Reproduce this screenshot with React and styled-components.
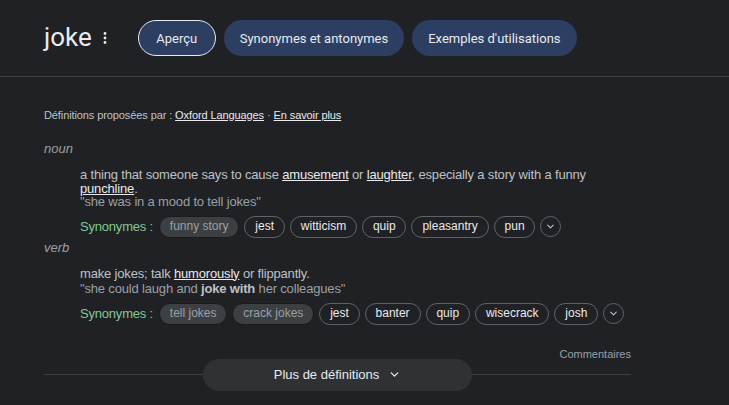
import React from "react";
import styled, { createGlobalStyle } from "styled-components";

const Global = createGlobalStyle`
  html, body { margin: 0; padding: 0; background: #202124; }
  body { font-family: "Liberation Sans", Arial, sans-serif; color: #bdc1c6; }
`;

const Page = styled.div`
  width: 729px;
  height: 405px;
  overflow: hidden;
  background: #202124;
`;

const Header = styled.div`
  display: flex;
  align-items: center;
  height: 76px;
  padding: 0 44px;
  border-bottom: 1px solid #3c4043;
`;

const Word = styled.h1`
  margin: 0;
  font-family: Roboto, "Open Sans", sans-serif;
  font-weight: 400;
  font-size: 26px;
  color: #e8eaed;
  line-height: 1;
  padding-bottom: 3px;
`;

const DotsButton = styled.span`
  display: flex;
  margin: 0 31px 0 11px;
  color: #e8eaed;
`;

const Tabs = styled.div`
  display: flex;
  gap: 8px;
`;

const Tab = styled.div`
  height: 36px;
  box-sizing: border-box;
  display: flex;
  align-items: center;
  padding: 0 ${(p) => (p.$active ? "17.5px" : "16px")};
  border-radius: 18px;
  background: #2c3f62;
  border: ${(p) => (p.$active ? "1px solid #e8eaed" : "none")};
  color: #e8eaed;
  font-family: Roboto, "Open Sans", sans-serif;
  font-size: 13px;
`;

const Body = styled.div`
  width: 587px;
  margin-left: 44px;
`;

const Source = styled.div`
  font-size: 11px;
  color: #bdc1c6;
  margin-top: 31px;
  line-height: 14px;
  letter-spacing: -0.1px;
  a {
    color: #e8eaed;
    text-decoration: underline;
  }
`;

const Pos = styled.div`
  font-style: italic;
  font-size: 13px;
  color: #9aa0a6;
  line-height: 16px;
  margin-top: ${(p) => p.$top}px;
`;

const Sense = styled.div`
  margin-left: 36px;
  margin-top: ${(p) => p.$top}px;
  font-size: 13px;
  line-height: 13.5px;
  letter-spacing: -0.17px;
`;

const Definition = styled.div`
  color: #bdc1c6;
  u { color: #e8eaed; }
`;

const Example = styled.div`
  color: #9aa0a6;
  margin-top: ${(p) => p.$top}px;
  b { color: #bdc1c6; font-weight: 700; }
`;

const SynRow = styled.div`
  display: flex;
  align-items: center;
  gap: 5px;
  letter-spacing: 0;
  margin-top: ${(p) => p.$top}px;
`;

const SynLabel = styled.span`
  color: #81c995;
  font-size: 13px;
  letter-spacing: -0.2px;
  margin-right: 1px;
`;

const Chip = styled.span`
  height: 22px;
  box-sizing: border-box;
  display: flex;
  align-items: center;
  padding: 0 9.9px;
  border-radius: 11px;
  font-size: 12px;
  border: 1px solid ${(p) => (p.$muted ? "#1a1b1e" : "#5f6368")};
  background: ${(p) => (p.$muted ? "#3c4043" : "transparent")};
  color: ${(p) => (p.$muted ? "#9aa0a6" : "#e8eaed")};
`;

const MoreChip = styled.span`
  width: 21px;
  height: 21px;
  box-sizing: border-box;
  border-radius: 50%;
  border: 1px solid #5f6368;
  display: flex;
  align-items: center;
  justify-content: center;
  color: #bdc1c6;
`;

const Feedback = styled.div`
  text-align: right;
  font-size: 11px;
  color: #9aa0a6;
  margin-top: 22px;
  line-height: 14px;
`;

const MoreWrap = styled.div`
  position: relative;
  display: flex;
  justify-content: center;
  margin-top: -2px;
  height: 32px;
  align-items: center;
  &::before {
    content: "";
    position: absolute;
    left: 0;
    right: 0;
    top: 15px;
    border-top: 1px solid #3c4043;
  }
`;

const MoreButton = styled.div`
  position: relative;
  width: 269px;
  height: 32px;
  border-radius: 16px;
  background: #303134;
  display: flex;
  align-items: center;
  justify-content: center;
  gap: 9px;
  color: #e8eaed;
  font-size: 13px;
`;

const Chevron = ({ size = 12 }) => (
  <svg width={size} height={size} viewBox="0 0 24 24" fill="none" stroke="currentColor" strokeWidth="2.4" strokeLinecap="round" strokeLinejoin="round">
    <path d="M6 9l6 6 6-6" />
  </svg>
);

const Dots = () => (
  <svg width="4" height="14" viewBox="0 0 4 14" fill="currentColor">
    <circle cx="2" cy="2.5" r="1.4" />
    <circle cx="2" cy="7" r="1.4" />
    <circle cx="2" cy="11.5" r="1.4" />
  </svg>
);

const senses = [
  {
    pos: "noun",
    posTop: 19,
    defTop: 11,
    exTop: 0,
    def: (
      <>
        a thing that someone says to cause <u>amusement</u> or <u>laughter</u>, especially a story with a funny <u>punchline</u>.
      </>
    ),
    example: <>"she was in a mood to tell jokes"</>,
    muted: ["funny story"],
    syns: ["jest", "witticism", "quip", "pleasantry", "pun"],
  },
  {
    pos: "verb",
    posTop: 2,
    defTop: 11,
    exTop: 2,
    def: (
      <>
        make jokes; talk <u>humorously</u> or flippantly.
      </>
    ),
    example: (
      <>
        "she could laugh and <b>joke with</b> her colleagues"
      </>
    ),
    muted: ["tell jokes", "crack jokes"],
    syns: ["jest", "banter", "quip", "wisecrack", "josh"],
  },
];

export default function App() {
  return (
    <Page>
      <Global />
      <Header>
        <Word>joke</Word>
        <DotsButton>
          <Dots />
        </DotsButton>
        <Tabs>
          <Tab $active>Aperçu</Tab>
          <Tab>Synonymes et antonymes</Tab>
          <Tab>Exemples d'utilisations</Tab>
        </Tabs>
      </Header>
      <Body>
        <Source>
          Définitions proposées par : <a>Oxford Languages</a> · <a>En savoir plus</a>
        </Source>
        {senses.map((s) => (
          <div key={s.pos}>
            <Pos $top={s.posTop}>{s.pos}</Pos>
            <Sense $top={s.defTop}>
              <Definition>{s.def}</Definition>
              <Example $top={s.exTop}>{s.example}</Example>
              <SynRow $top={7}>
                <SynLabel>Synonymes :</SynLabel>
                {s.muted.map((m) => (
                  <Chip key={m} $muted>
                    {m}
                  </Chip>
                ))}
                {s.syns.map((m) => (
                  <Chip key={m}>{m}</Chip>
                ))}
                <MoreChip>
                  <Chevron size={11} />
                </MoreChip>
              </SynRow>
            </Sense>
          </div>
        ))}
        <Feedback>Commentaires</Feedback>
        <MoreWrap>
          <MoreButton>
            Plus de définitions
            <Chevron size={13} />
          </MoreButton>
        </MoreWrap>
      </Body>
    </Page>
  );
}
